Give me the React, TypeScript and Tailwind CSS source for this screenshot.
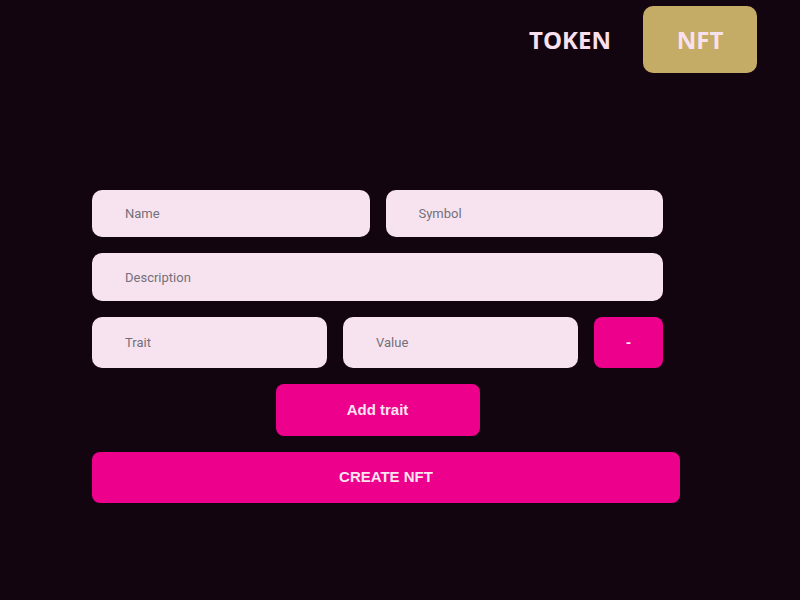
import React from 'react';

const inputCls =
  'h-full w-full rounded-[10px] bg-[#f7e3ef] pl-[33px] text-[13px] text-[#333] placeholder:text-[#74707a] outline-none font-["Roboto",sans-serif]';

export default function App() {
  return (
    <div className="min-h-[600px] w-full bg-[#130510]">
      <div className="flex items-center justify-end gap-[32px] pr-[43px] pt-[6px]">
        <span className="text-[24px] font-bold text-[#f8e1ee] font-['Open_Sans',sans-serif]">TOKEN</span>
        <button className="h-[67px] w-[114px] rounded-[10px] bg-[#c5ac66] text-[24px] font-bold text-[#f8e1ee] font-['Open_Sans',sans-serif]">
          NFT
        </button>
      </div>

      <div className="ml-[92px] mt-[117px] flex w-[571px] flex-col gap-[16px]">
        <div className="flex h-[47px] gap-[16px]">
          <input className={inputCls} placeholder="Name" />
          <input className={inputCls} placeholder="Symbol" />
        </div>
        <div className="h-[48px]">
          <input className={inputCls} placeholder="Description" />
        </div>
        <div className="flex h-[51px] gap-[16px]">
          <div className="w-[235px] shrink-0">
            <input className={inputCls} placeholder="Trait" />
          </div>
          <div className="w-[235px] shrink-0">
            <input className={inputCls} placeholder="Value" />
          </div>
          <button className="h-full flex-1 rounded-[8px] bg-[#ec008c] text-[15px] font-bold text-[#fce4f0] font-['Liberation_Sans',sans-serif]">
            -
          </button>
        </div>
        <div className="flex justify-center">
          <button className="h-[52px] w-[204px] rounded-[8px] bg-[#ec008c] text-[15px] font-bold text-[#fce4f0] font-['Liberation_Sans',sans-serif]">
            Add trait
          </button>
        </div>
        <button className="h-[51px] w-[588px] rounded-[8px] bg-[#ec008c] text-[15px] font-bold text-[#fce4f0] font-['Liberation_Sans',sans-serif]">
          CREATE NFT
        </button>
      </div>
    </div>
  );
}
